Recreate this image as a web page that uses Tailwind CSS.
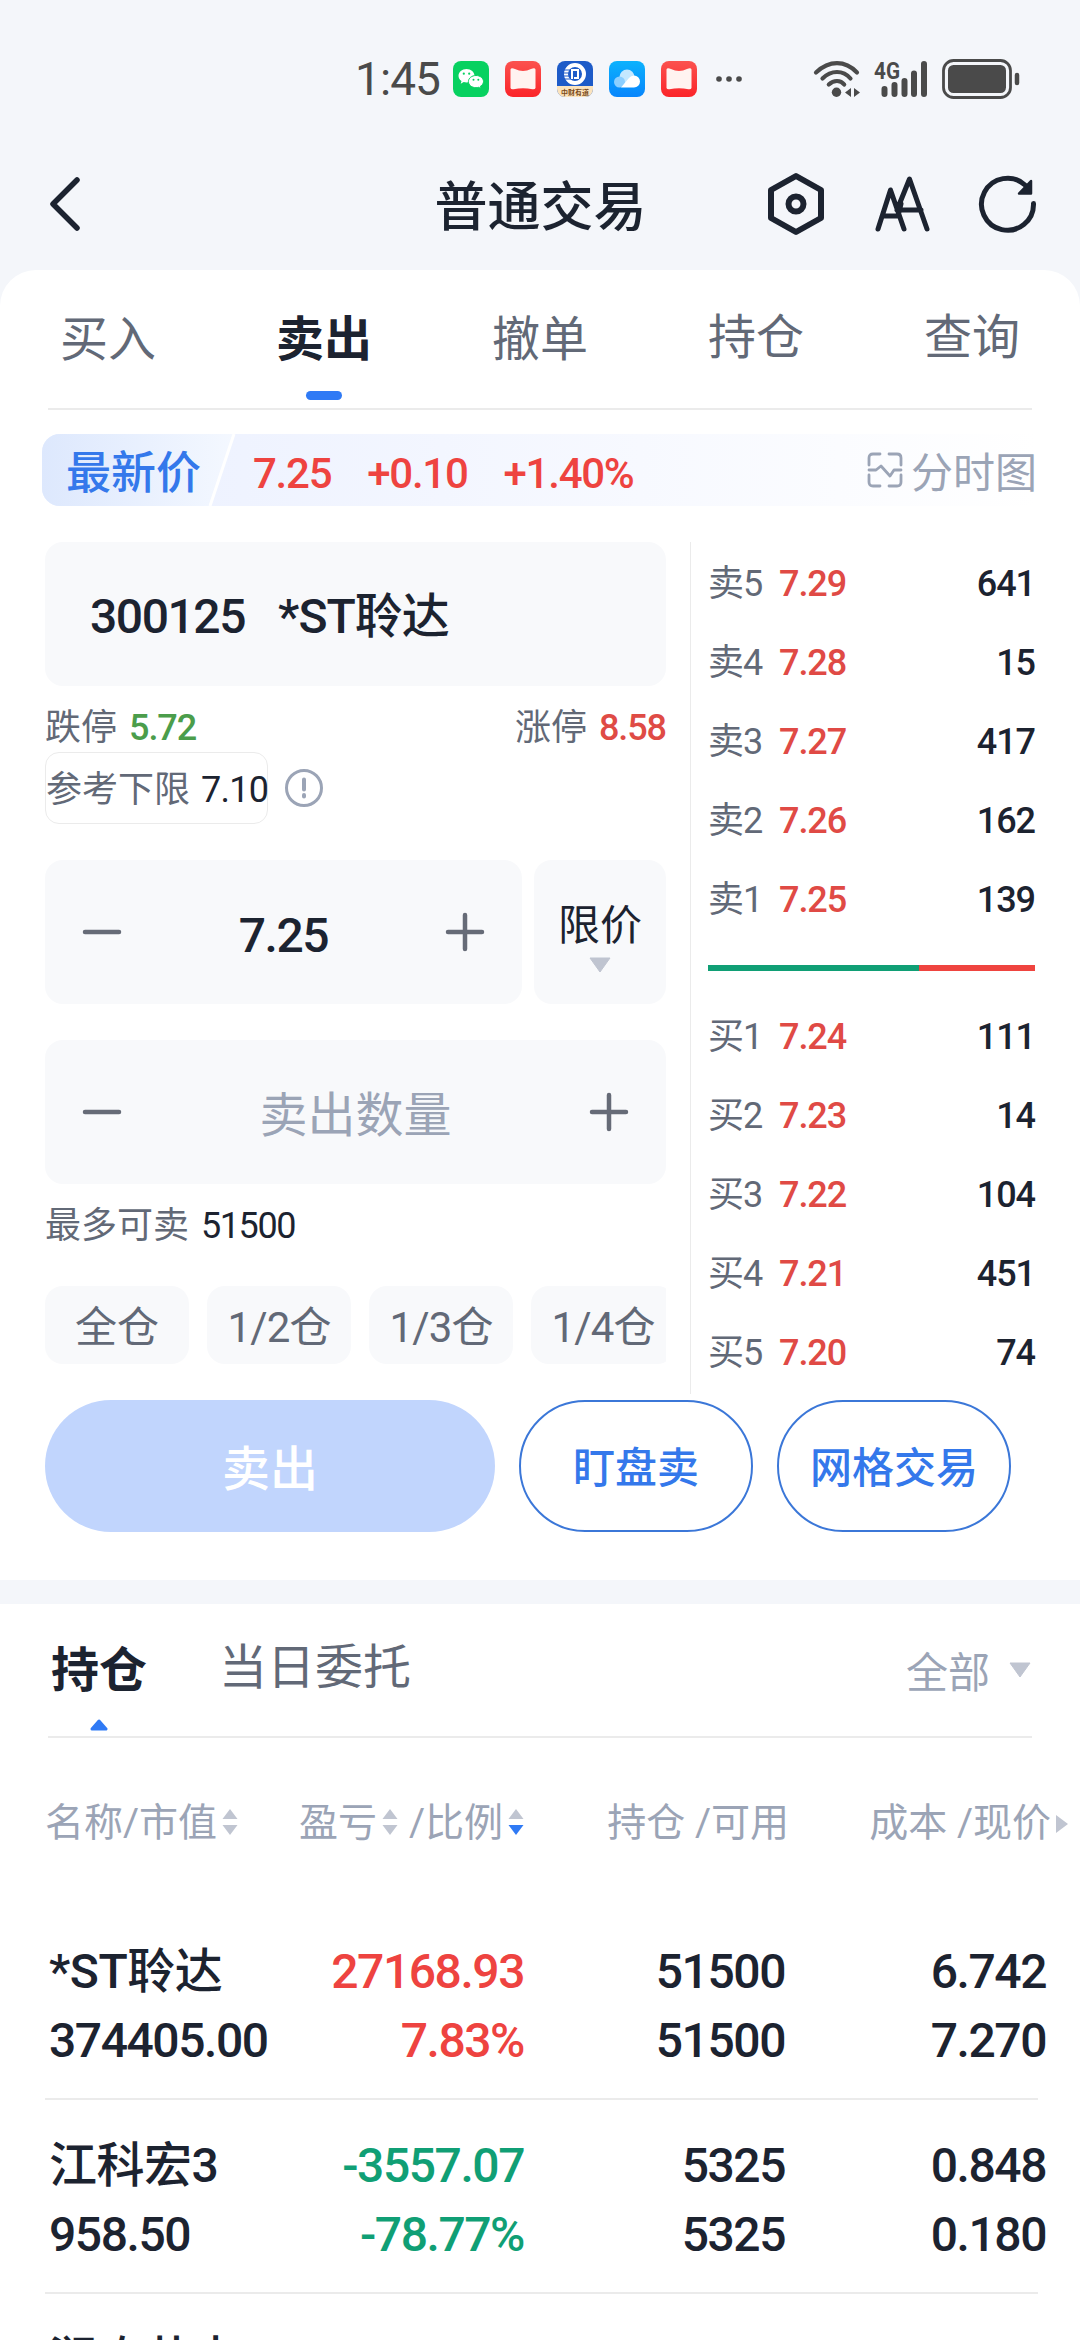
<!DOCTYPE html>
<html lang="zh-CN">
<head>
  <meta charset="UTF-8" />
  <meta name="viewport" content="width=device-width, initial-scale=1" />
  <title>普通交易</title>
  <script src="https://cdn.jsdelivr.net/npm/@tailwindcss/browser@4"></script>
</head>
<body class="w-[1080px] h-[2340px] overflow-hidden bg-[#f4f6fa] text-[#1c2330] leading-none font-[Roboto,'Noto_Sans_CJK_SC',sans-serif]">

  <!-- Status bar -->
  <div class="h-[138px] pt-5 pl-[355px] flex items-center text-[#4a4a4a]">
    <span class="w-[98px] text-[46px] tracking-[-0.02em]">1:45</span>
    <div class="flex gap-4">
      <svg class="size-9" viewBox="0 0 36 36">
        <rect width="36" height="36" rx="8" fill="#07d160" />
        <path d="M13.500 8C9 8 5.500 11 5.500 14.800c0 2.200 1.100 4 3 5.200l-.8 2.800 3-1.700c.9.300 1.800.4 2.800.4 4.500 0 8-3 8-6.700S18 8 13.500 8z" fill="#fff" />
        <path d="M23 14.500c-4.200 0-7.600 2.700-7.600 6.100s3.400 6.100 7.600 6.100c.9 0 1.800-.1 2.600-.4l2.500 1.400-.7-2.400c1.900-1.100 3.100-2.800 3.100-4.700 0-3.400-3.300-6.100-7.500-6.100z" fill="#fff" stroke="#07d160" />
        <g fill="#07d160"><circle cx="10.800" cy="12.700" r="1.100" /><circle cx="16.200" cy="12.700" r="1.100" /><circle cx="20.500" cy="18.800" r="1" /><circle cx="25.300" cy="18.800" r="1" /></g>
      </svg>
      <svg class="size-9" viewBox="0 0 36 36">
        <linearGradient id="red" x2="0" y2="1"><stop stop-color="#fb524f" /><stop offset="1" stop-color="#fb2429" /></linearGradient>
        <rect width="36" height="36" rx="8" fill="url(#red)" />
        <path d="M5.500 8.500Q6 6.500 10 8q8 4 16 0 4-1.500 4.500.5V27q-.5 1.500-3 1.200-9.500-2-19 0-2.500.3-3-1.200z" fill="#fff3f0" />
      </svg>
      <svg class="size-9" viewBox="0 0 36 36">
        <clipPath id="app"><rect width="36" height="36" rx="8" /></clipPath>
        <g clip-path="url(#app)">
          <rect width="36" height="36" fill="#1d5bc8" />
          <rect y="25" width="36" height="11" fill="#fbe3bd" />
          <circle cx="18" cy="13" r="9" fill="none" stroke="#fff" stroke-width="4" />
          <path d="M7 9h8M6 12h8M6 15h8M7 18h9" stroke="#1d5bc8" stroke-width="1" />
          <path d="M15 18v-9h6v8h-4" fill="none" stroke="#fff" stroke-width="2" />
          <text x="18" y="33.500" text-anchor="middle" font-size="7" font-weight="700" fill="#7a4a1a" font-family="Noto Sans CJK SC">中财有道</text>
        </g>
      </svg>
      <svg class="size-9" viewBox="0 0 36 36">
        <linearGradient id="blue" x2="0" y2="1"><stop stop-color="#0bb2fd" /><stop offset="1" stop-color="#0785fc" /></linearGradient>
        <rect width="36" height="36" rx="8" fill="url(#blue)" />
        <circle cx="18" cy="16" r="7.500" fill="#c4e8ff" /><circle cx="10.500" cy="21" r="5.500" fill="#8ccfff" />
        <path d="M12 26.500 20 17q2-2.500 5-2.500a6 6 0 0 1 0 12z" fill="#fff" />
      </svg>
      <svg class="size-9" viewBox="0 0 36 36">
        <rect width="36" height="36" rx="8" fill="url(#red)" />
        <path d="M5.500 8.500Q6 6.500 10 8q8 4 16 0 4-1.500 4.500.5V27q-.5 1.500-3 1.200-9.500-2-19 0-2.500.3-3-1.200z" fill="#fff3f0" />
      </svg>
    </div>
    <svg class="ml-[18px] w-7 h-2" viewBox="0 0 28 8" fill="currentColor"><circle cx="4" cy="4" r="2.800" /><circle cx="14" cy="4" r="2.800" /><circle cx="24" cy="4" r="2.800" /></svg>
    <svg class="ml-[70px] w-[48px] h-9" viewBox="0 0 48 36" fill="none" stroke="currentColor" stroke-width="4.200" stroke-linecap="round">
      <path d="M3 11.500Q13 2.200 24 2.200T44 11.500M9.500 17.500Q16 11 24 11t13.500 6.500M15.800 23.500Q19.500 20 24 20t7.200 3.500" />
      <circle cx="23.500" cy="31.300" r="4.700" fill="currentColor" stroke="none" />
      <path d="M38 27v9l-6-4.500zM41 27v9l6-4.500z" fill="currentColor" stroke="none" />
    </svg>
    <svg class="ml-3 w-[56px] h-[46px]" viewBox="0 -5 56 46">
      <text x="1" y="18" font-size="24" font-weight="700" textLength="26" lengthAdjust="spacingAndGlyphs" fill="currentColor" font-family="Roboto">4G</text>
      <path d="M11.500 28v5M21.500 24v9M31.500 20v13M41 12.500V33M51 3v30" stroke="currentColor" stroke-width="6" stroke-linecap="round" />
    </svg>
    <svg class="ml-[13px] w-[80px] h-10" viewBox="0 0 80 40" fill="none" stroke="currentColor">
      <rect x="1.500" y="1.500" width="67" height="37" rx="10" stroke-width="2.800" />
      <rect x="6" y="6" width="58" height="28" rx="5.500" fill="currentColor" stroke="none" />
      <path d="M75 16v8" stroke-width="4.500" stroke-linecap="round" />
    </svg>
  </div>

  <!-- Title bar -->
  <header class="h-[132px] flex items-center">
    <div class="flex-1 pl-[47px]">
      <svg class="w-9 h-[60px]" viewBox="0 0 36 60" fill="none" stroke="currentColor" stroke-width="5.500" stroke-linecap="round" stroke-linejoin="round"><path d="M30 6 6 30l24 24" /></svg>
    </div>
    <h1 class="pt-2 pr-1 text-[53px] font-medium">普通交易</h1>
    <div class="flex-1 flex justify-end pr-[42px] gap-[47px]">
      <svg class="w-[60px] h-16" viewBox="0 0 60 64" fill="none" stroke="currentColor" stroke-width="6" stroke-linejoin="round"><path d="M30 4 55 18v28L30 60 5 46V18z" /><circle cx="30" cy="32" r="7.500" /></svg>
      <svg class="w-[58px] h-16" viewBox="0 0 58 64" fill="none" stroke="currentColor" stroke-width="5" stroke-linecap="round" stroke-linejoin="round"><path d="M5 57 17.500 18 31 57M11 44h14M24 38 36.500 7 54 57M26 38h22M25 44l3-12" /></svg>
      <svg class="w-[60px] h-16" viewBox="0 0 60 64" fill="none" stroke="currentColor" stroke-width="5" stroke-linecap="round"><path d="M55.500 31.500a26 26 0 1 1-8.500-18.500" /><path d="M53 9v12.500H41z" fill="currentColor" stroke-width="2.500" stroke-linejoin="round" /></svg>
    </div>
  </header>

  <main class="bg-white rounded-t-[36px]">
    <!-- Tabs -->
    <nav class="h-[138px] grid grid-cols-5 text-[48px] text-[#626977]">
      <a class="pt-0.5 flex items-center justify-center">买入</a>
      <a class="relative pt-0.5 flex items-center justify-center font-bold text-[#1c2330]">卖出
        <span class="absolute bottom-2 left-[90px] w-9 h-[9px] rounded-full bg-[#2f7af5]"></span>
      </a>
      <a class="pt-0.5 flex items-center justify-center">撤单</a>
      <a class="pb-0.5 flex items-center justify-center">持仓</a>
      <a class="pb-0.5 flex items-center justify-center">查询</a>
    </nav>
    <div class="mx-12 h-0.5 bg-[#ebebeb]"></div>

    <!-- Latest price -->
    <div class="mt-6 ml-[42px] mr-[43px] h-18 flex items-center rounded-l-[18px] overflow-hidden bg-linear-to-r from-[#ebf0ff] to-white">
      <div class="relative w-[194px] h-full pt-1.5 pl-[24px] flex items-center text-[45px] font-medium text-[#3478eb]">
        <svg class="absolute inset-0 w-[194px] h-18" viewBox="0 0 194 72"><linearGradient id="tag"><stop stop-color="#dde8fd" /><stop offset="1" stop-color="#f4f8ff" /></linearGradient><path d="M0 0h192l-24 72H0z" fill="url(#tag)" /><path d="M192 0l-24 72" stroke="#fff" stroke-width="3" /></svg>
        <span class="relative">最新价</span>
      </div>
      <div class="pl-[17px] flex gap-[36px] text-[42px] font-medium tracking-[-0.03em] text-[#ee4340] pt-[7px]">
        <span>7.25</span><span>+0.10</span><span>+1.40%</span>
      </div>
      <div class="ml-auto flex items-center gap-[8px] text-[42px] text-[#9ba4b6]">
        <svg class="size-9" viewBox="0 0 36 36" fill="none" stroke="currentColor" stroke-width="2.800" stroke-linecap="round" stroke-linejoin="round"><path d="M2 13V6q0-4 4-4h7M22 2h8q4 0 4 4v7M34 23v7q0 4-4 4h-8M13 34H6q-4 0-4-4v-7M2 18h7l5-4 9 10 4-6h7" /></svg>
        <span class="pt-[7px]">分时图</span>
      </div>
    </div>

    <div class="mt-9 pl-[45px] flex">
      <!-- Order form -->
      <section class="w-[621px] h-[852px] overflow-hidden">
        <div class="h-36 pl-[45px] pt-1.5 flex items-center gap-[33px] rounded-[18px] bg-[#f8f9fb] text-[48px] font-medium tracking-[-0.03em]"><span>300125</span><span class="tracking-[-0.02em]">*ST聆达</span></div>
        <div class="h-[66px] pt-[17px] flex items-center justify-between text-[36px] text-[#626977]">
          <p class="flex gap-[12px]">跌停 <span class="font-medium tracking-[-0.03em] text-[#4b9d4b]">5.72</span></p>
          <p class="flex gap-[12px]">涨停 <span class="font-medium tracking-[-0.03em] text-[#df4b45]">8.58</span></p>
        </div>
        <div class="flex items-center gap-[16px]">
          <p class="w-[223px] h-18 pt-1 flex items-center gap-[11px] whitespace-nowrap rounded-[14px] border border-[#ebebeb] text-[36px] text-[#626977]">参考下限 <span class="tracking-[-0.02em] text-[#1c2330]">7.10</span></p>
          <svg class="size-10" viewBox="0 0 40 40" fill="none" stroke="#9ba4b6" stroke-width="3" stroke-linecap="round"><circle cx="20" cy="20" r="17.500" /><path d="M20 11.500v10M20 27v1.500" stroke-width="4" /></svg>
        </div>
        <div class="mt-9 flex gap-3">
          <div class="w-[477px] h-36 px-[37px] flex items-center justify-between rounded-[18px] bg-[#f8f9fb]">
            <svg class="w-10 h-10" viewBox="0 0 40 40" stroke="#666b77" stroke-width="4.500" stroke-linecap="round"><path d="M3 20h34" /></svg>
            <span class="pt-2 text-[48px] font-medium tracking-[-0.03em]">7.25</span>
            <svg class="w-10 h-10" viewBox="0 0 40 40" stroke="#666b77" stroke-width="4.500" stroke-linecap="round"><path d="M3 20h34M20 3v34" /></svg>
          </div>
          <div class="w-[132px] h-36 pt-[45px] flex flex-col items-center rounded-[18px] bg-[#f8f9fb] text-[42px]">
            限价
            <svg class="mt-[10px] w-[22px] h-4" viewBox="0 0 22 16" fill="#bfc4d0" stroke="#bfc4d0" stroke-linejoin="round"><path d="M1 1h20L11 15z" /></svg>
          </div>
        </div>
        <div class="mt-9 h-36 px-[37px] flex items-center justify-between rounded-[18px] bg-[#f8f9fb]">
          <svg class="w-10 h-10" viewBox="0 0 40 40" stroke="#666b77" stroke-width="4.500" stroke-linecap="round"><path d="M3 20h34" /></svg>
          <span class="pt-2 text-[48px] text-[#9ba4b6]">卖出数量</span>
          <svg class="w-10 h-10" viewBox="0 0 40 40" stroke="#666b77" stroke-width="4.500" stroke-linecap="round"><path d="M3 20h34M20 3v34" /></svg>
        </div>
        <p class="h-[102px] pb-[19px] flex items-center gap-[12px] text-[36px] text-[#626977]">最多可卖 <span class="tracking-[-0.04em] text-[#1c2330]">51500</span></p>
        <div class="flex gap-[18px] text-[42px] text-[#626977]">
          <button class="shrink-0 w-36 h-[78px] pt-1.5 rounded-[18px] bg-[#f8f9fb]">全仓</button>
          <button class="shrink-0 w-36 h-[78px] pt-1.5 rounded-[18px] bg-[#f8f9fb] tracking-[-0.02em]">1/2仓</button>
          <button class="shrink-0 w-36 h-[78px] pt-1.5 rounded-[18px] bg-[#f8f9fb] tracking-[-0.02em]">1/3仓</button>
          <button class="shrink-0 w-36 h-[78px] pt-1.5 rounded-[18px] bg-[#f8f9fb] tracking-[-0.02em]">1/4仓</button>
        </div>
      </section>

      <div class="ml-6 w-px bg-[#ebebeb]"></div>

      <!-- Order book -->
      <section class="ml-[17px] w-[327px] pt-[2px]">
        <div id="asks"></div>
        <div class="mt-[26px] mb-[26px] h-1.5 flex"><span class="w-[211px] bg-[#109f75]"></span><span class="flex-1 bg-[#ef443f]"></span></div>
        <div id="bids"></div>
      </section>
    </div>

    <div class="mt-1.5 pl-[45px] pb-12 flex gap-6 font-medium">
      <button class="w-[450px] h-[132px] pt-2 rounded-full bg-[#c1d5fd] text-[48px] text-white">卖出</button>
      <button class="w-[234px] h-[132px] pt-1.5 rounded-full border-2 border-[#3b77d8] text-[42px] text-[#3478eb]">盯盘卖</button>
      <button class="w-[234px] h-[132px] pt-1.5 rounded-full border-2 border-[#3b77d8] text-[42px] text-[#3478eb]">网格交易</button>
    </div>
  </main>

  <!-- Holdings -->
  <section class="mt-6 h-[736px] overflow-hidden bg-white">
    <div class="h-[132px] pl-[51px] pr-[49px] flex items-center text-[48px]">
      <span class="relative h-full pt-0.5 flex items-center font-bold">持仓
        <svg class="absolute bottom-[5px] left-[38px] w-5 h-3" viewBox="0 0 20 12" fill="#2f7af5" stroke="#2f7af5" stroke-width="3" stroke-linejoin="round"><path d="M10 2l7 8H3z" /></svg>
      </span>
      <span class="ml-[72px] pb-1 text-[#626977]">当日委托</span>
      <span class="ml-auto pt-[7px] text-[42px] text-[#9ba4b6]">全部</span>
      <svg class="ml-[19px] w-[22px] h-4" viewBox="0 0 22 16" fill="#c0c5d1" stroke="#c0c5d1" stroke-linejoin="round"><path d="M1 1h20L11 15z" /></svg>
    </div>
    <div class="mx-12 h-0.5 bg-[#ebebeb]"></div>

    <div class="h-[168px] pt-[3px] pl-[45px] grid grid-cols-[224px_255px_265px_280px] items-center text-[39px] text-[#9ba4b6]">
      <span class="flex items-center gap-[5px]">名称/市值<svg class="mb-1 w-4 h-7" viewBox="0 0 16 28" fill="#c0c5d1"><path d="M8 1l7.500 10H.5z" /><path d="M8 27l7.500-10H.5z" /></svg></span>
      <span class="flex items-center justify-end gap-[5px]">盈亏<svg class="mb-1 w-4 h-7" viewBox="0 0 16 28" fill="#c0c5d1"><path d="M8 1l7.500 10H.5z" /><path d="M8 27l7.500-10H.5z" /></svg><span class="ml-[6px]">/比例</span><svg class="mb-1 w-4 h-7" viewBox="0 0 16 28" fill="#c0c5d1"><path d="M8 1l7.500 10H.5z" /><path d="M8 27l7.500-10H.5z" fill="#2f7af5" /></svg></span>
      <span class="text-right">持仓 /可用</span>
      <span class="flex items-center justify-end gap-1 whitespace-nowrap">成本 /现价<svg class="w-[14px] h-[18px]" viewBox="0 0 14 18" fill="#c0c5d1"><path d="M1 0v18l12-9z" /></svg></span>
    </div>

    <div id="holdings"></div>
  </section>

<script>
  const asks = [['卖5', '7.29', 641], ['卖4', '7.28', 15], ['卖3', '7.27', 417], ['卖2', '7.26', 162], ['卖1', '7.25', 139]];
  const bids = [['买1', '7.24', 111], ['买2', '7.23', 14], ['买3', '7.22', 104], ['买4', '7.21', 451], ['买5', '7.20', 74]];

  function renderBook(id, rows) {
    document.getElementById(id).innerHTML = rows.map(([label, price, qty]) => `
      <div class="h-[79px] flex items-center text-[36px] tracking-[-0.03em]">
        <span class="w-[71px] text-[#626977]">${label}</span>
        <span class="font-medium text-[#e04a45]">${price}</span>
        <span class="ml-auto font-medium">${qty}</span>
      </div>`).join('');
  }
  renderBook('asks', asks);
  renderBook('bids', bids);

  // name, market value, profit, ratio, held, available, cost, price
  const holdings = [
    ['*ST聆达', '374405.00', '27168.93', '7.83%', '51500', '51500', '6.742', '7.270'],
    ['江科宏3', '958.50', '-3557.07', '-78.77%', '5325', '5325', '0.848', '0.180'],
    ['润农节水', '', '', '', '', '', '', '']
  ];
  document.getElementById('holdings').innerHTML = holdings.map(([name, value, profit, ratio, held, avail, cost, price]) => `
    <div class="relative h-[194px] pt-[31px] pl-[49px] grid grid-cols-[220px_255px_261px_261px] auto-rows-[69px] text-[48px] leading-[69px] font-medium tracking-[-0.03em] text-right">
      <span class="text-left tracking-[-0.01em]">${name}</span>
      <span class="${profit.startsWith('-') ? 'text-[#109f75]' : 'text-[#ee4340]'}">${profit}</span>
      <span>${held}</span>
      <span>${cost}</span>
      <span class="text-left">${value}</span>
      <span class="${profit.startsWith('-') ? 'text-[#109f75]' : 'text-[#ee4340]'}">${ratio}</span>
      <span>${avail}</span>
      <span>${price}</span>
      <div class="absolute left-[45px] right-[42px] bottom-0 h-0.5 bg-[#ebebeb]"></div>
    </div>`).join('');
</script>

</body>
</html>
